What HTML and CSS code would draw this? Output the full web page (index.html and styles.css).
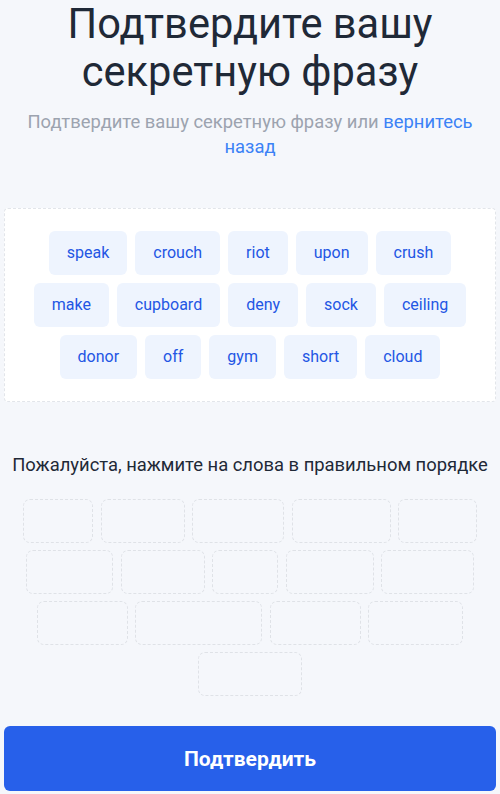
FILE: index.html
```html
<!DOCTYPE html>
<html lang="ru">
<head>
<meta charset="utf-8">
<title>Подтвердите вашу секретную фразу</title>
<link rel="stylesheet" href="styles.css">
</head>
<body>
<main class="page">
  <h1 class="title">Подтвердите вашу секретную фразу</h1>
  <p class="subtitle">Подтвердите вашу секретную фразу или <a class="link" href="#">вернитесь назад</a></p>

  <section class="words">
    <span class="chip">speak</span>
    <span class="chip">crouch</span>
    <span class="chip">riot</span>
    <span class="chip">upon</span>
    <span class="chip">crush</span>
    <span class="chip">make</span>
    <span class="chip">cupboard</span>
    <span class="chip">deny</span>
    <span class="chip">sock</span>
    <span class="chip">ceiling</span>
    <span class="chip">donor</span>
    <span class="chip">off</span>
    <span class="chip">gym</span>
    <span class="chip">short</span>
    <span class="chip">cloud</span>
  </section>

  <p class="instruction">Пожалуйста, нажмите на слова в правильном порядке</p>

  <section class="slots">
    <span class="slot" style="width:70px"></span>
    <span class="slot" style="width:84px"></span>
    <span class="slot" style="width:92px"></span>
    <span class="slot" style="width:99px"></span>
    <span class="slot" style="width:79px"></span>
    <span class="slot" style="width:87px"></span>
    <span class="slot" style="width:84px"></span>
    <span class="slot" style="width:66px"></span>
    <span class="slot" style="width:88px"></span>
    <span class="slot" style="width:93px"></span>
    <span class="slot" style="width:91px"></span>
    <span class="slot" style="width:127px"></span>
    <span class="slot" style="width:91px"></span>
    <span class="slot" style="width:95px"></span>
    <span class="slot" style="width:104px"></span>
  </section>

  <button class="confirm" type="button">Подтвердить</button>
</main>
</body>
</html>
```

FILE: styles.css
```css
* {
  box-sizing: border-box;
}

html, body {
  margin: 0;
  padding: 0;
  background: #f5f7fb;
}

body {
  font-family: Roboto, "Noto Sans", "Liberation Sans", sans-serif;
  color: #1f2937;
}

.page {
  display: flex;
  flex-direction: column;
  align-items: center;
  height: 794px;
  padding: 0 4px;
}

.title {
  margin: 0;
  width: 100%;
  padding: 0 30px;
  font-size: 41.6px;
  line-height: 48px;
  font-weight: 400;
  text-align: center;
  color: #1f2937;
}

.subtitle {
  margin: 13px 0 0;
  width: 100%;
  padding: 0 12px;
  font-size: 18.4px;
  line-height: 25px;
  text-align: center;
  color: #9ca3af;
}

.link {
  color: #3b82f6;
  text-decoration: none;
}

.words {
  margin-top: 49px;
  width: 100%;
  background: #ffffff;
  border: 1px dashed #e2e5ea;
  border-radius: 4px;
  padding: 22px 22px;
  display: flex;
  flex-wrap: wrap;
  justify-content: center;
  gap: 8px 8px;
}

.chip {
  display: inline-flex;
  align-items: center;
  justify-content: center;
  height: 44px;
  padding: 0 18px;
  background: #eef4fe;
  border-radius: 6px;
  color: #2356e4;
  font-size: 16px;
  line-height: 20px;
}

.instruction {
  margin: 50px 0 0;
  font-size: 18.4px;
  line-height: 25px;
  text-align: center;
  color: #1f2937;
}

.slots {
  margin-top: 22px;
  width: 100%;
  display: flex;
  flex-wrap: wrap;
  justify-content: center;
  gap: 7px 7.5px;
}

.slot {
  display: block;
  height: 44px;
  border: 1.5px dashed #dfe2e7;
  border-radius: 7px;
}

.confirm {
  margin-top: auto;
  margin-bottom: 3px;
  width: 100%;
  height: 65px;
  border: none;
  border-radius: 6px;
  background: #2760ea;
  color: #ffffff;
  font-family: Roboto, "Noto Sans", "Liberation Sans", sans-serif;
  font-size: 21px;
  font-weight: 700;
  cursor: pointer;
}
```
